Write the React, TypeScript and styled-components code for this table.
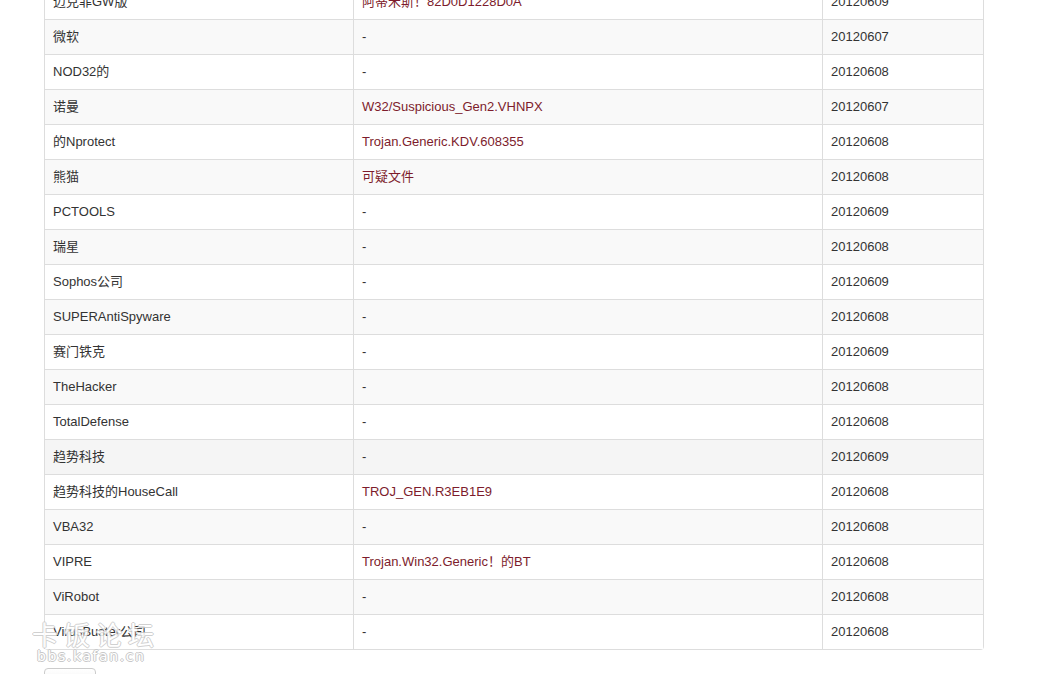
import React from "react";
import styled, { createGlobalStyle } from "styled-components";

const GlobalStyle = createGlobalStyle`
  html, body {
    margin: 0;
    padding: 0;
    background: #fff;
    overflow: hidden;
  }
  body {
    font-family: "Liberation Sans", Arial, "Noto Sans CJK SC", sans-serif;
    font-size: 13px;
    line-height: 18px;
    color: #333;
  }
`;

const Page = styled.div`
  position: relative;
  width: 1046px;
  height: 674px;
  overflow: hidden;
`;

const Container = styled.div`
  width: 940px;
  margin: -16px 0 0 44px;
`;

const Table = styled.table`
  width: 940px;
  border-collapse: separate;
  border-spacing: 0;
  border: 1px solid #ddd;
  border-left: 0;
  border-radius: 4px;
  margin-bottom: 18px;
  table-layout: fixed;
`;

const Row = styled.tr<{ $striped?: boolean; $hover?: boolean }>`
  background: ${p => (p.$hover ? "#f5f5f5" : p.$striped ? "#f9f9f9" : "#fff")};
`;

const Cell = styled.td<{ $red?: boolean; $first?: boolean }>`
  padding: 8px;
  line-height: 18px;
  text-align: left;
  vertical-align: top;
  border-left: 1px solid #ddd;
  border-top: ${p => (p.$first ? "0" : "1px solid #ddd")};
  color: ${p => (p.$red ? "#7d1c2c" : "#333")};
  white-space: nowrap;
`;

const Button = styled.div`
  width: 50px;
  height: 30px;
  border: 1px solid #ccc;
  border-radius: 4px;
  background: linear-gradient(#fff, #e6e6e6);
`;

const Watermark = styled.div`
  position: absolute;
  left: 32px;
  top: 619px;
  display: flex;
  flex-direction: column;
  align-items: flex-start;
  pointer-events: none;
  color: #fff;
  text-shadow: 1px 0 0 #c8c8c8, -1px 0 0 #c8c8c8, 0 1px 0 #c8c8c8, 0 -1px 0 #c8c8c8;
`;

const MarkTitle = styled.span`
  font-family: "Noto Sans CJK SC", sans-serif;
  font-size: 26px;
  line-height: 30px;
  letter-spacing: 6px;
  opacity: 0.85;
`;

const MarkUrl = styled.span`
  font-family: "DejaVu Sans", sans-serif;
  font-size: 14px;
  line-height: 14px;
  letter-spacing: 1.6px;
  margin-left: 5px;
`;

type Scan = { name: string; result: string; date: string };

const scans: Scan[] = [
  { name: "迈克菲GW版", result: "阿蒂米斯！82D0D1228D0A", date: "20120609" },
  { name: "微软", result: "-", date: "20120607" },
  { name: "NOD32的", result: "-", date: "20120608" },
  { name: "诺曼", result: "W32/Suspicious_Gen2.VHNPX", date: "20120607" },
  { name: "的Nprotect", result: "Trojan.Generic.KDV.608355", date: "20120608" },
  { name: "熊猫", result: "可疑文件", date: "20120608" },
  { name: "PCTOOLS", result: "-", date: "20120609" },
  { name: "瑞星", result: "-", date: "20120608" },
  { name: "Sophos公司", result: "-", date: "20120609" },
  { name: "SUPERAntiSpyware", result: "-", date: "20120608" },
  { name: "赛门铁克", result: "-", date: "20120609" },
  { name: "TheHacker", result: "-", date: "20120608" },
  { name: "TotalDefense", result: "-", date: "20120608" },
  { name: "趋势科技", result: "-", date: "20120609" },
  { name: "趋势科技的HouseCall", result: "TROJ_GEN.R3EB1E9", date: "20120608" },
  { name: "VBA32", result: "-", date: "20120608" },
  { name: "VIPRE", result: "Trojan.Win32.Generic！的BT", date: "20120608" },
  { name: "ViRobot", result: "-", date: "20120608" },
  { name: "VirusBuster公司", result: "-", date: "20120608" }
];

const App = () => (
  <>
    <GlobalStyle />
    <Page>
      <Container>
        <Table>
          <colgroup>
            <col style={{ width: 309 }} />
            <col style={{ width: 469 }} />
            <col style={{ width: 161 }} />
          </colgroup>
          <tbody>
            {scans.map((s, i) => (
              <Row key={s.name} $striped={i % 2 === 1} $hover={s.name === "趋势科技"}>
                <Cell $first={i === 0}>{s.name}</Cell>
                <Cell $first={i === 0} $red={s.result !== "-"}>
                  {s.result}
                </Cell>
                <Cell $first={i === 0}>{s.date}</Cell>
              </Row>
            ))}
          </tbody>
        </Table>
        <Button />
      </Container>
      <Watermark>
        <MarkTitle>卡饭论坛</MarkTitle>
        <MarkUrl>bbs.kafan.cn</MarkUrl>
      </Watermark>
    </Page>
  </>
);

export default App;
